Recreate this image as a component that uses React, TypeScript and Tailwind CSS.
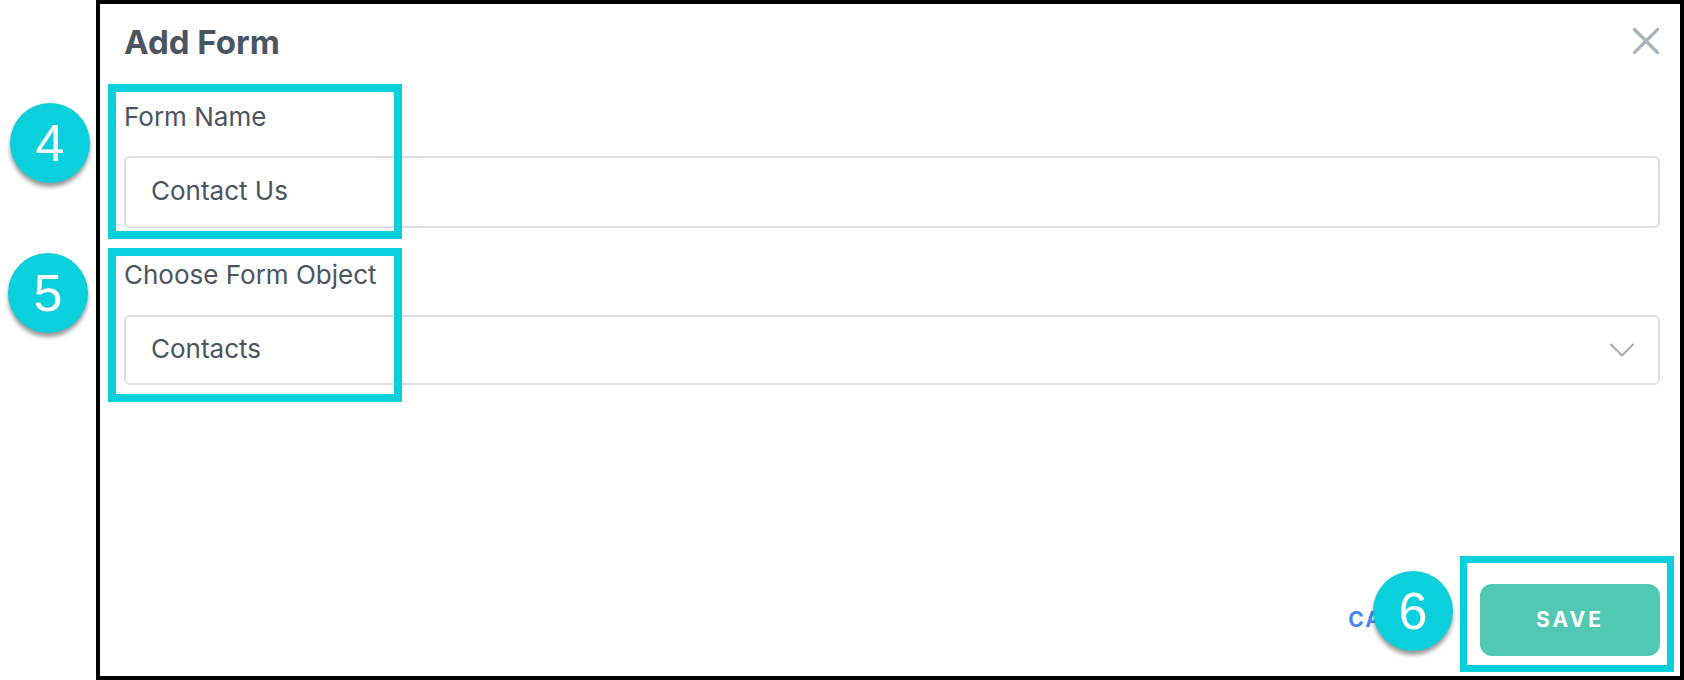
// annotation markers drawn over the dialog
function Marker({ n, className }: { n: number; className: string }) {
  return (
    <div
      className={`absolute flex h-[80px] w-[80px] items-center justify-center rounded-full bg-[#0acfdc] text-[52px] leading-none text-white shadow-[0_4px_4px_rgba(0,0,0,0.4)] ${className}`}
      style={{ fontFamily: '"Liberation Sans", Arial, sans-serif' }}
    >
      {n}
    </div>
  );
}

export default function App() {
  return (
    <div
      className="relative h-[680px] w-[1684px] overflow-hidden bg-white text-[#4a5561]"
      style={{ fontFamily: 'Inter, "Open Sans", sans-serif' }}
    >
      {/* Dialog */}
      <div className="ml-[96px] box-border flex h-[680px] w-[1588px] flex-col border-4 border-black bg-white pt-[18px] pb-[20px] pl-[24px] pr-[20px]">
        <div className="flex h-[40px] items-center justify-between">
          <h2 className="text-[33px] font-bold leading-[40px] text-[#4a5561]">Add Form</h2>
          <svg width="26" height="26" viewBox="0 0 26 26" className="-mt-[3px] mr-[1px] text-[#aab3bc]">
            <path d="M1.5 1.5 L24.5 24.5 M24.5 1.5 L1.5 24.5" stroke="currentColor" strokeWidth="3.2" strokeLinecap="round" />
          </svg>
        </div>

        <label className="mt-[40px] text-[26px] leading-[30px]">Form Name</label>
        <div className="mt-[24px] flex h-[72px] items-center rounded-[6px] border-2 border-[#dde1e5] px-[25px] pb-[3px] text-[26px]">
          Contact Us
        </div>

        <label className="mt-[32px] text-[26px] leading-[30px]">Choose Form Object</label>
        <div className="mt-[25px] flex h-[70px] items-center justify-between rounded-[6px] border-2 border-[#dde1e5] pl-[25px] pr-[24px] text-[26px]">
          <span className="pb-[3px]">Contacts</span>
          <svg width="24" height="14" viewBox="0 0 24 14" className="text-[#a3abb4]">
            <path d="M1 1.5 L12 12.5 L23 1.5" fill="none" stroke="currentColor" strokeWidth="2" strokeLinecap="round" strokeLinejoin="round" />
          </svg>
        </div>

        <div className="flex-1" />

        <div className="flex items-center justify-end gap-[33px]">
          <button className="text-[21px] font-bold tracking-[2px] text-[#4a86f0]">CANCEL</button>
          <button className="flex h-[72px] w-[180px] items-center justify-center rounded-[12px] bg-[#50c8b4] text-[21px] font-bold tracking-[3px] text-white">
            SAVE
          </button>
        </div>
      </div>

      {/* Highlight boxes */}
      <div className="absolute left-[108px] top-[84px] h-[155px] w-[294px] border-[8px] border-[#0acfdc]" />
      <div className="absolute left-[108px] top-[248px] h-[154px] w-[294px] border-[8px] border-[#0acfdc]" />
      <div className="absolute left-[1460px] top-[556px] h-[116px] w-[214px] border-[7px] border-[#0acfdc]" />

      <Marker n={4} className="left-[10px] top-[103px]" />
      <Marker n={5} className="left-[8px] top-[253px]" />
      <Marker n={6} className="left-[1373px] top-[571px]" />
    </div>
  );
}
